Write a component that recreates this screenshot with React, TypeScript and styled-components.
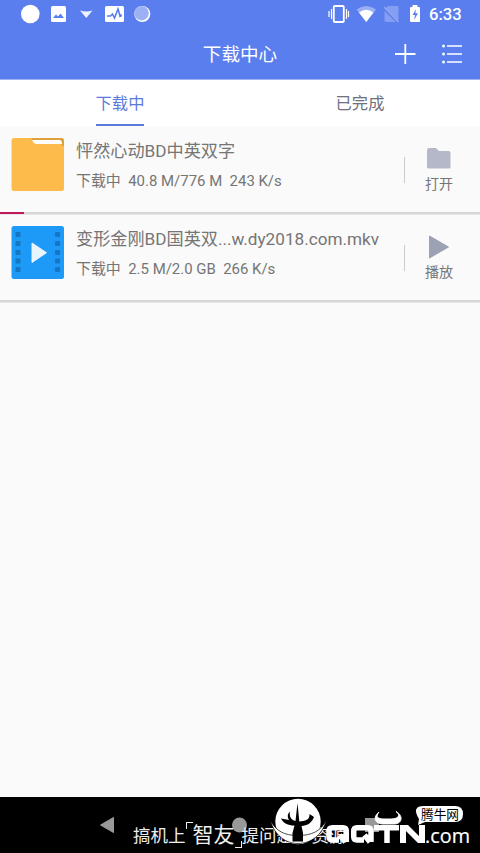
import React from "react";
import styled, { createGlobalStyle } from "styled-components";

const Global = createGlobalStyle`
  body { margin: 0; background: #fafafa; }
  * { box-sizing: border-box; }
`;
const Screen = styled.div`
  width: 480px; height: 853px; display: flex; flex-direction: column; overflow: hidden;
  background: #fafafa; font-family: Roboto, "Noto Sans CJK SC", sans-serif; color: #757575;
`;
const Header = styled.header`
  height: 80px; background: #5a7eee; border-bottom: 1px solid #9db2f5; color: #fff; flex: none;
`;
const StatusBar = styled.div`
  height: 28px; display: flex; justify-content: space-between;
  svg { display: block; }
`;
const Clock = styled.span`
  width: 51px; padding-top: 4px; font-size: 16.6px; line-height: 22px; font-weight: 500; white-space: nowrap;
`;
const StatusRight = styled.div`display: flex;`;
const TitleBar = styled.div`
  height: 51px; display: grid; grid-template-columns: 1fr 160px 160px; align-items: center;
`;
const Title = styled.h1`
  grid-column: 2; margin: 0; padding-top: 2px; font-size: 18.6px; font-weight: 400; line-height: 28px; text-align: center;
`;
const Actions = styled.div`
  display: flex; justify-content: flex-end; gap: 25px; padding-right: 17px;
  svg { display: block; }
`;
const Tabs = styled.nav`
  height: 46px; flex: none; background: #fff; display: grid; grid-template-columns: 1fr 1fr; justify-items: center;
`;
const Tab = styled.div<{ $active?: boolean }>`
  height: 46px; font-size: 16.3px; line-height: 48px; white-space: nowrap;
  color: ${p => (p.$active ? "#5a7bdc" : "#6e7080")};
  box-shadow: ${p => (p.$active ? "inset 0 -2px #5a7bdc" : "none")};
`;
const List = styled.main`flex: 1;`;
const Item = styled.section`height: 88px; display: flex; flex-direction: column;`;
const ItemBody = styled.div`
  height: 86px; flex: none; display: flex; padding: 12px 0 0 11px;
`;
const Thumb = styled.svg`width: 53px; height: 53px; flex: none; display: block;`;
const Info = styled.div`flex: 1; padding-left: 12px; white-space: nowrap;`;
const Name = styled.div`font-size: 17.15px; line-height: 26px; height: 31px;`;
const Detail = styled.div`font-size: 14.95px; line-height: 24px; white-space: pre;`;
const Action = styled.div`
  width: 76px; display: flex; flex-direction: column; align-items: center; position: relative;
  font-size: 14px; line-height: 22px; padding: 7px 6px 0 0;
  svg { display: block; width: 28px; height: 28px; flex: none; }
  &::before { content: ""; position: absolute; left: 0; top: 19px; height: 26px; width: 1px; background: #ccc; }
`;
const Progress = styled.div`
  height: 3px; flex: none; background: #d6d6d6; border-bottom: 1px solid #e6e6e6;
`;
const Bar = styled.div<{ $value: number }>`height: 2px; width: ${p => p.$value}%; background: #c2185b;`;
const NavBar = styled.footer`height: 56px; flex: none; background: #000; position: relative; overflow: hidden;`;
const NavArt = styled.svg`position: absolute; inset: 0; display: block;`;
const Caption = styled.div`
  position: absolute; left: 133px; top: 24px; height: 30px; display: flex; align-items: center;
  color: #eee; font-size: 17.5px; line-height: 30px; white-space: nowrap;
`;
const Brand = styled.span`font-size: 21px; margin: -2px 0 0;`;
const Corner = styled.span<{ $end?: boolean }>`
  width: 7px; height: 7px; border: 0 solid #eee;
  border-width: ${p => (p.$end ? "0 1px 1px 0" : "1px 0 0 1px")};
  margin: ${p => (p.$end ? "0 0 3px" : "1px 0 0")};
  align-self: ${p => (p.$end ? "flex-end" : "flex-start")};
`;

const items = [
  { name: "怦然心动BD中英双字", detail: "下载中  40.8 M/776 M  243 K/s", action: "打开", folder: true, progress: 5 },
  { name: "变形金刚BD国英双...w.dy2018.com.mkv", detail: "下载中  2.5 M/2.0 GB  266 K/s", action: "播放", folder: false, progress: 0 },
];

const FolderThumb = () => (
  <Thumb viewBox="0 0 53 53">
    <rect x=".5" width="52.5" height="53" rx="2.5" fill="#fdbb4b" />
    <path d="M20 0H50Q53 0 53 3V8H51L49 3H22Z" fill="#dfa040" />
    <path d="M21 2H48Q51 2 51 6H25Q22 5 21 2Z" fill="#fff" />
  </Thumb>
);
const VideoThumb = () => (
  <Thumb viewBox="0 0 53 53">
    <rect x=".5" width="52.5" height="53" rx="2.5" fill="#1d99f8" />
    {[6, 15, 24, 32.5, 41].map(y => (
      <g key={y} fill="#1776c3"><rect x="4.5" y={y} width="5" height="5" rx="1" /><rect x="44" y={y} width="5" height="5" rx="1" /></g>
    ))}
    <path d="M21 17V36.5L35.5 26.7Z" fill="#e8f5ff" stroke="#e8f5ff" strokeLinejoin="round" />
  </Thumb>
);

export default function App() {
  return (
    <Screen>
      <Global />
      <Header>
        <StatusBar>
          <svg width="160" height="28" viewBox="0 0 160 28" fill="#fff">
            <circle cx="30.3" cy="14" r="9.3" />
            <rect x="51" y="6" width="15" height="16" rx="1.5" />
            <path d="M53 18L56 14.5L58 16.5L60.5 13.5L64 18Z" fill="#5a7eee" />
            <path d="M80 10.5Q86.3 12.5 92.5 10.5L86.3 18Z" opacity=".9" />
            <rect x="105" y="6" width="19" height="16" rx="1.5" />
            <path d="M107 16H110.5L112.5 14L114.5 18L118 9L120 16L121 15" fill="none" stroke="#5a7eee" strokeWidth="1.6" />
            <circle cx="120.5" cy="15.5" r="1.5" fill="#5a7eee" />
            <circle cx="142.3" cy="14" r="8" />
            <circle cx="141.5" cy="13.2" r="7.2" fill="#9cb1f5" />
            <circle cx="141.7" cy="13.3" r="6.7" fill="none" stroke="#b7c6f8" strokeDasharray="1 1.5" />
          </svg>
          <StatusRight>
            <svg width="101" height="28" viewBox="328 0 101 28" fill="#fff">
              <rect x="333.8" y="6" width="10" height="16" rx="1" fill="none" stroke="#fff" strokeWidth="1.8" />
              <path d="M331.5 9V19M329 11V17M346.5 9V19M348.5 11V17" stroke="#fff" strokeWidth="1.2" />
              <path d="M356.5 9.5Q366.2 2.5 376 9.5L366.2 22Z" opacity=".38" />
              <path d="M359 12.5Q366.2 7 373.5 12.5L366.2 22Z" />
              <path d="M388 6H397Q398.5 6 398.5 8V21L385 8.5ZM384.5 11L396 22H386Q384.5 22 384.5 20Z" opacity=".25" />
              <path d="M384 7L398.5 22" stroke="#93aaf5" strokeWidth="1.3" />
              <path d="M412.5 5H417.5V7H419Q420 7 420 8.2V21Q420 22 419 22H411Q410 22 410 21V8.2Q410 7 411 7H412.5Z" />
              <path d="M416 9L412.5 15H415L414 20L418 13.3H415.3Z" fill="#5a7eee" />
            </svg>
            <Clock>6:33</Clock>
          </StatusRight>
        </StatusBar>
        <TitleBar>
          <Title>下载中心</Title>
          <Actions>
            <svg width="22" height="22" viewBox="0 0 22 22" fill="none" stroke="#fff" strokeWidth="1.8"><path d="M1 11H21.5M11.3 1V21" /></svg>
            <svg width="22" height="22" viewBox="0 0 22 22" fill="#fff" stroke="#fff" strokeWidth="1.5">
              <path d="M6 3H21M6 11H21M6 19H21" />
              {[3, 11, 19].map(y => <circle key={y} cx="2.5" cy={y} r="1.5" stroke="none" />)}
            </svg>
          </Actions>
        </TitleBar>
      </Header>
      <Tabs><Tab $active>下载中</Tab><Tab>已完成</Tab></Tabs>
      <List>
        {items.map(item => (
          <Item key={item.name}>
            <ItemBody>
              {item.folder ? <FolderThumb /> : <VideoThumb />}
              <Info><Name>{item.name}</Name><Detail>{item.detail}</Detail></Info>
              <Action>
                {item.folder
                  ? <svg viewBox="0 0 28 28"><path d="M4 3H11L14 6H23.5Q25.5 6 25.5 8V22Q25.5 23.5 24 23.5H4Q2 23.5 2 22V5Q2 3 4 3Z" fill="#b5b8c8" /></svg>
                  : <svg viewBox="0 0 28 28"><path d="M4.5 3V25L23.5 14Z" fill="#9da1b4" stroke="#9da1b4" strokeLinejoin="round" /></svg>}
                {item.action}
              </Action>
            </ItemBody>
            <Progress><Bar $value={item.progress} /></Progress>
          </Item>
        ))}
      </List>
      <NavBar>
        <NavArt width="480" height="56" viewBox="0 797 480 56">
          <path d="M100.5 825L113.5 817.5V832.5Z" fill="#999" stroke="#999" strokeLinejoin="round" />
          <circle cx="239.5" cy="825" r="7.5" fill="#999" />
          <rect x="365" y="818" width="14" height="14" fill="#999" />
        </NavArt>
        <Caption>搞机上<Corner /><Brand>智友</Brand><Corner $end />提问题下资源</Caption>
        <NavArt width="480" height="56" viewBox="0 797 480 56">
          <circle cx="298" cy="821.5" r="22.7" fill="#fff" />
          <path d="M270 820C275 836 286 843.5 298 843.5S322 836 326.5 820C321 831 312 835.5 298 835.5S276 831 270 820Z" fill="#fff" stroke="#000" strokeWidth=".7" />
          <path d="M297.5 803L299.3 821.5C305 821 310 820 309.5 814L314 817C311 824 307 825.5 301.5 826L303 833V841.5H292.5V833L294.5 825.5C288 825.5 283 823 281 818.5L289 820C287 817 287.5 814 289.7 811.5C289.5 817 291 820 295.5 821Z" fill="#000" />
          <g fill="none" stroke="#fff" strokeWidth="5.5">
            <path d="M346.3 842V831Q346.3 827.7 343 827.7H332.5Q329 827.7 329 831V836.5Q329 840 332.5 840H339M339.5 835L345.5 842M371 842V831Q371 827.7 367.7 827.7H357Q353.7 827.7 353.7 831V836.5Q353.7 840 357 840H364M364.5 835L370 842" />
            <path d="M374 827.7H399M387 827.7V843" />
          </g>
          <path d="M400 843V825H408L419 836V825H425V843H418L406 831V843Z" fill="#fff" />
          <path d="M379 812C371 819 377 824 383 824H394C402 824 404 816 396 811.5C402 816 397 819 391 819H384C378 819 375 817 379 812Z" fill="#fff" stroke="#fff" strokeWidth="1" />
          <path d="M424 806H455Q463 806 463 814Q463 822 455 822H425L418 825L419 819Q411 806 424 806Z" fill="#fff" />
          <text x="421" y="819" fontFamily="Noto Sans CJK SC, sans-serif" fontSize="12.7" fontWeight="400" fill="#000">腾牛网</text>
          <text x="425" y="842.5" fontFamily="Open Sans, sans-serif" fontSize="19.5" textLength="45" lengthAdjust="spacingAndGlyphs" fill="#fff" stroke="#fff" strokeWidth=".2">.com</text>
        </NavArt>
      </NavBar>
    </Screen>
  );
}
